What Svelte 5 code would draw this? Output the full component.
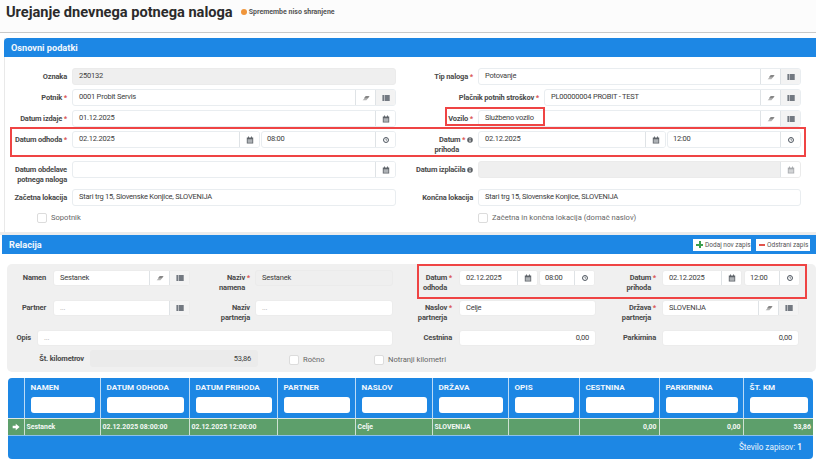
<script>
    const columns = [
        { title: "", width: 16 },
        { title: "NAMEN", width: 76, value: "Sestanek" },
        { title: "DATUM ODHODA", width: 89, value: "02.12.2025 08:00:00" },
        { title: "DATUM PRIHODA", width: 88, value: "02.12.2025 12:00:00" },
        { title: "PARTNER", width: 78, value: "" },
        { title: "NASLOV", width: 77, value: "Celje" },
        { title: "DRŽAVA", width: 76, value: "SLOVENIJA" },
        { title: "OPIS", width: 71, value: "" },
        { title: "CESTNINA", width: 80, value: "0,00", num: true },
        { title: "PARKIRNINA", width: 84, value: "0,00", num: true },
        { title: "ŠT. KM", width: 70, value: "53,86", num: true }
    ];
</script>

{#snippet icon(name)}
    {#if name === "eraser"}
        <svg class="ico" viewBox="0 0 12 12"><path d="M1 9.5 L5.6 4.2 H11 L6.6 9.5 Z" fill="#b4b4b4"/><path d="M5.6 3 H11.4 L8.6 6.4 H2.9 Z" fill="#868686"/></svg>
    {:else if name === "list"}
        <svg class="ico" viewBox="0 0 12 12"><path d="M.6 2h2.6v2.2H.6zM4 2h7.6v2.2H4zM.6 4.9h2.6v2.2H.6zM4 4.9h7.6v2.2H4zM.6 7.8h2.6V10H.6zM4 7.8h7.6V10H4z" fill="#4a525c"/></svg>
    {:else if name === "calendar"}
        <svg class="ico" viewBox="0 0 12 12"><path d="M1.2 2.4h9.6v8.8H1.2z" fill="#5f646a"/><path d="M3 .8h1.4v2.4H3zM7.6 .8h1.4v2.4H7.6z" fill="#5f646a"/><path d="M2.4 5h7.2v5H2.4z" fill="#aeb2b6"/></svg>
    {:else if name === "clock"}
        <svg class="ico" viewBox="0 0 12 12"><circle cx="6" cy="6" r="3.7" fill="none" stroke="#4a525c" stroke-width="1.5"/><path d="M6 3.8V6.2H7.6" fill="none" stroke="#4a525c" stroke-width="1"/></svg>
    {:else if name === "info"}
        <svg class="info" viewBox="0 0 12 12"><circle cx="6" cy="6" r="5.6" fill="#5d6166"/><path d="M5 2.4h2v1.7H5zM5 5h2v4.6H5z" fill="#fff"/></svg>
    {/if}
{/snippet}

{#snippet group(value, width, btns = [], kind = "", mute = "")}
    <div class="group {kind}" style="width: {width}px">
        <span class="val">{value}</span>
        {#each btns as b}
            <span class="btn {b === 'list' ? 'gray' : ''} {mute}">{@render icon(b)}</span>
        {/each}
    </div>
{/snippet}

<div class="page">
    <header class="top">
        <h1>Urejanje dnevnega potnega naloga</h1>
        <span class="dot"></span>
        <span class="unsaved">Spremembe niso shranjene</span>
    </header>

    <section class="panel first">
        <div class="bar rounded">Osnovni podatki</div>
        <div class="form">
            <div class="field">
                <span class="lab l58">Oznaka</span>
                {@render group("250132", 324, [], "off")}
            </div>
            <div class="field">
                <span class="lab l58">Tip naloga <i>*</i></span>
                {@render group("Potovanje", 323, ["eraser", "list"])}
            </div>

            <div class="field">
                <span class="lab l58">Potnik <i>*</i></span>
                {@render group("0001 Probit Servis", 324, ["eraser", "list"])}
            </div>
            <div class="field">
                <span class="lab l124">Plačnik potnih stroškov <i>*</i></span>
                {@render group("PL00000004 PROBIT - TEST", 257, ["eraser", "list"])}
            </div>

            <div class="field">
                <span class="lab l58">Datum izdaje <i>*</i></span>
                {@render group("01.12.2025", 324, ["calendar"])}
            </div>
            <div class="field">
                <span class="lab l58">Vozilo <i>*</i></span>
                {@render group("Službeno vozilo", 323, ["eraser", "list"])}
            </div>

            <div class="field">
                <span class="lab l58">Datum odhoda <i>*</i></span>
                {@render group("02.12.2025", 188, ["calendar"])}
                {@render group("08:00", 135, ["clock"], "short")}
            </div>
            <div class="field">
                <span class="lab l58 two">Datum <i>*</i> {@render icon("info")}<b class="second wide">prihoda</b></span>
                {@render group("02.12.2025", 188, ["calendar"])}
                {@render group("12:00", 134, ["clock"], "short")}
            </div>

            <div class="field">
                <span class="lab l58 two">Datum obdelave<b>potnega naloga</b></span>
                {@render group("", 324, ["calendar"])}
            </div>
            <div class="field">
                <span class="lab l58">Datum izplačila {@render icon("info")}</span>
                {@render group("", 323, ["calendar"], "off", "mute")}
            </div>

            <div class="field">
                <span class="lab l58">Začetna lokacija</span>
                {@render group("Stari trg 15, Slovenske Konjice, SLOVENIJA", 324)}
            </div>
            <div class="field">
                <span class="lab l58">Končna lokacija</span>
                {@render group("Stari trg 15, Slovenske Konjice, SLOVENIJA", 323)}
            </div>

            <label class="check sopotnik"><span class="box"></span>Sopotnik</label>
            <label class="check domov"><span class="box"></span>Začetna in končna lokacija (domač naslov)</label>
        </div>
    </section>

    <section class="panel second-panel">
        <div class="bar">
            Relacija
            <div class="actions">
                <span class="action add"><em class="plus"></em>Dodaj nov zapis</span>
                <span class="action del"><em class="minus"></em>Odstrani zapis</span>
            </div>
        </div>

        <div class="gray-box">
            <div class="rel">
                <div class="field">
                    <span class="lab w39">Namen</span>
                    {@render group("Sestanek", 137, ["eraser", "list"], "plain")}
                </div>
                <div class="field">
                    <span class="lab w60 two">Naziv <i>*</i><b class="second">namena</b></span>
                    {@render group("Sestanek", 138, [], "off")}
                </div>
                <div class="field">
                    <span class="lab w59 two">Datum <i>*</i><b class="second">odhoda</b></span>
                    {@render group("02.12.2025", 79, ["calendar"], "plain")}
                    {@render group("08:00", 56, ["clock"], "plain short")}
                </div>
                <div class="field g6">
                    <span class="lab w60 two">Datum <i>*</i><b class="second">prihoda</b></span>
                    {@render group("02.12.2025", 80, ["calendar"], "plain")}
                    {@render group("12:00", 56, ["clock"], "plain short")}
                </div>

                <div class="field">
                    <span class="lab w39">Partner</span>
                    {@render group("...", 137, ["list"], "plain hint")}
                </div>
                <div class="field">
                    <span class="lab w60 two">Naziv<b>partnerja</b></span>
                    {@render group("...", 138, [], "plain hint")}
                </div>
                <div class="field">
                    <span class="lab w59 two">Naslov <i>*</i><b class="second">partnerja</b></span>
                    {@render group("Celje", 137, [], "plain")}
                </div>
                <div class="field g6">
                    <span class="lab w60 two">Država <i>*</i><b class="second">partnerja</b></span>
                    {@render group("SLOVENIJA", 137, ["eraser", "list"], "plain")}
                </div>

                <div class="field g6 span2">
                    <span class="lab w24">Opis</span>
                    {@render group("...", 356, [], "plain hint")}
                </div>
                <div class="field">
                    <span class="lab w59">Cestnina</span>
                    {@render group("0,00", 137, [], "plain right")}
                </div>
                <div class="field g6">
                    <span class="lab w60">Parkirnina</span>
                    {@render group("0,00", 137, [], "plain right")}
                </div>

                <div class="km">
                    <span class="lab w77">Št. kilometrov</span>
                    {@render group("53,86", 168, [], "off right")}
                    <label class="check roc"><span class="box"></span>Ročno</label>
                    <label class="check"><span class="box"></span>Notranji kilometri</label>
                </div>
            </div>
        </div>

        <div class="grid-wrap">
            <table>
                <colgroup>
                    {#each columns as c}
                        <col style="width: {c.width}px" />
                    {/each}
                </colgroup>
                <thead>
                    <tr>
                        {#each columns as c}
                            <th>
                                {#if c.title}
                                    <span>{c.title}</span>
                                    <div class="filter"></div>
                                {/if}
                            </th>
                        {/each}
                    </tr>
                </thead>
                <tbody>
                    <tr>
                        {#each columns as c, i}
                            <td class:num={c.num}>
                                {#if i === 0}
                                    <svg class="arrow" viewBox="0 0 12 12"><path d="M1 4.2H5.6V1.2L11.4 6L5.6 10.8V7.8H1Z" fill="#fff"/></svg>
                                {:else}
                                    {c.value}
                                {/if}
                            </td>
                        {/each}
                    </tr>
                </tbody>
            </table>
            <div class="foot">Število zapisov: <strong>1</strong></div>
        </div>
    </section>

    <div class="mark m1"></div>
    <div class="mark m2"></div>
    <div class="mark m3"></div>
</div>

<style>
    :global(body) {
        background: #fff;
    }

    .page {
        position: relative;
        width: 816px;
        height: 459px;
        overflow: hidden;
        font-family: Roboto, "Liberation Sans", sans-serif;
        font-size: 7.5px;
        color: #333;
        background: #fff;
    }

    .top {
        display: flex;
        align-items: center;
        height: 33px;
        padding: 0 0 8px 6px;
        box-sizing: border-box;
        background: #fcfcfc;
        border-bottom: 1px solid #c9c9c9;
    }

    h1 {
        margin: 0 8px 0 0;
        font-size: 14.6px;
        font-weight: 700;
        color: #2b2b2b;
    }

    .dot {
        width: 6px;
        height: 6px;
        margin-right: 2px;
        border-radius: 50%;
        background: #f0953a;
    }

    .unsaved {
        font-size: 7px;
        font-weight: 700;
        color: #555;
    }

    .panel.first {
        margin: 5px 0 0 4px;
        height: 194px;
        border-left: 1px solid #e9e9e9;
    }

    .bar {
        display: flex;
        align-items: center;
        justify-content: space-between;
        height: 19px;
        padding: 0 6px 0 7px;
        background: #1d87e4;
        color: #f2f7fc;
        font-size: 9.2px;
        font-weight: 700;
    }

    .rounded {
        margin-left: -1px;
        border-radius: 4px 0 0 0;
    }

    .form {
        display: grid;
        grid-template-columns: 406px 406px;
        grid-template-rows: 17px 17px 17px 26px 24px 17px 11px;
        row-gap: 4px;
        padding: 11px 0 0 4px;
    }

    .field {
        display: flex;
        align-items: flex-start;
        gap: 5px;
    }

    .lab {
        flex: none;
        padding-top: 4px;
        text-align: right;
        font-size: 7.5px;
        letter-spacing: -0.17px;
        font-weight: 700;
        line-height: 10px;
        color: #4a4a4a;
        white-space: nowrap;
    }

    .lab i {
        font-style: normal;
        color: #d9534f;
    }

    .two b {
        display: block;
        font-weight: 700;
    }

    .second {
        padding-right: 5px;
    }

    .second.wide {
        padding-right: 14px;
    }

    .info {
        width: 6px;
        height: 6px;
        vertical-align: -0.5px;
    }

    .l58 { width: 58px; }
    .l124 { width: 124px; }
    .w24 { width: 24px; }
    .w39 { width: 39px; margin-right: 2px; }
    .w59 { width: 59px; margin-right: 2px; }
    .w60 { width: 60px; }
    .w77 { width: 77px; }

    .group {
        flex: none;
        display: flex;
        height: 17px;
        box-sizing: border-box;
        border: 1px solid #e9edf0;
        border-radius: 3px;
        background: #fff;
        overflow: hidden;
        font-size: 7.5px;
        letter-spacing: -0.22px;
        color: #3c3c3c;
    }

    .group + .group {
        margin-left: -4px;
    }

    .val {
        flex: 1;
        min-width: 0;
        padding: 0 6px;
        line-height: 14px;
        white-space: nowrap;
    }

    .short .val {
        padding-left: 5px;
    }

    .btn {
        flex: none;
        display: flex;
        align-items: center;
        justify-content: center;
        width: 19px;
        border-left: 1px solid #dfe3e6;
        background: #fff;
    }

    .btn.gray {
        background: #f3f3f3;
    }

    .btn.mute .ico {
        opacity: 0.55;
    }

    .ico {
        width: 8px;
        height: 8px;
    }

    .off {
        background: #efefef;
        border-color: #ebebeb;
    }

    .right .val {
        text-align: right;
    }

    .hint .val {
        color: #aaa;
    }

    .check {
        display: flex;
        align-items: center;
        gap: 4px;
        font-size: 7.6px;
        color: #666;
    }

    .box {
        flex: none;
        width: 10px;
        height: 10px;
        box-sizing: border-box;
        border: 1px solid #dcdcdc;
        border-radius: 2px;
        background: #fff;
    }

    .sopotnik {
        margin: 4px 0 0 28px;
    }

    .domov {
        margin: 4px 0 0 63px;
    }

    .second-panel {
        padding-left: 2px;
        border-top: 3px solid #ececec;
    }

    .actions {
        display: flex;
        gap: 5px;
    }

    .action {
        display: flex;
        align-items: center;
        gap: 2px;
        height: 12px;
        box-sizing: border-box;
        padding-left: 3px;
        background: #fff;
        font-size: 6.5px;
        font-weight: 400;
        color: #555;
    }

    .add {
        width: 58px;
    }

    .del {
        width: 54px;
    }

    .plus {
        width: 7px;
        height: 7px;
        background:
            linear-gradient(#3c9f4e, #3c9f4e) center / 7px 2px no-repeat,
            linear-gradient(#3c9f4e, #3c9f4e) center / 2px 7px no-repeat;
    }

    .minus {
        width: 6px;
        height: 2px;
        background: #e2534b;
    }

    .gray-box {
        margin: 10px 0 0 5px;
        height: 108px;
        border-radius: 5px;
        background: #f0f0f0;
    }

    .rel {
        display: grid;
        grid-template-columns: 183px 203px 203px 203px;
        grid-template-rows: 26px 26px 16px 17px;
        row-gap: 4px;
        padding-top: 6px;
    }

    .rel .lab {
        padding-top: 3px;
    }

    .rel .group {
        height: 16px;
    }

    .rel .val {
        line-height: 13px;
    }

    .plain {
        border-color: #ececec;
    }

    .span2 {
        grid-column: span 2;
    }

    .km {
        grid-column: 1 / -1;
        display: flex;
        align-items: flex-start;
        gap: 6px;
    }

    .km .lab {
        padding-top: 4px;
    }

    .km .group {
        height: 17px;
        background: #ebebeb;
    }

    .km .val {
        line-height: 15px;
    }

    .km .check {
        height: 17px;
        padding-top: 1px;
    }

    .km .roc {
        width: 79px;
        margin-left: 25px;
    }

    .g6 { gap: 6px; }

    .grid-wrap {
        margin: 6px 0 0 6px;
        width: 805px;
        border-radius: 4px;
        overflow: hidden;
        background: #1d87e4;
    }

    table {
        width: 805px;
        table-layout: fixed;
        border-collapse: collapse;
    }

    th {
        height: 40px;
        padding: 4px 5px 0 6px;
        box-sizing: border-box;
        vertical-align: top;
        text-align: left;
        border-left: 1px solid rgba(255, 255, 255, 0.7);
        font-size: 8.1px;
        font-weight: 700;
        color: #f2f7fc;
    }

    th:first-child, td:first-child {
        border-left: none;
    }

    th span {
        display: block;
        height: 15px;
        line-height: 11px;
        white-space: nowrap;
    }

    .filter {
        height: 16px;
        border-radius: 3px;
        background: #fff;
    }

    td {
        height: 17px;
        padding: 0 2px;
        box-sizing: border-box;
        border-left: 1px solid rgba(255, 255, 255, 0.7);
        border-top: 1px solid #dfe9e2;
        border-bottom: 1px solid #8ec1ea;
        background: #5d9f6b;
        font-size: 6.9px;
        font-weight: 700;
        color: #f4f8f5;
        white-space: nowrap;
    }

    td.num {
        text-align: right;
    }

    .arrow {
        display: block;
        width: 8px;
        height: 8px;
        margin-left: 2px;
    }

    .foot {
        height: 23px;
        padding-right: 11px;
        line-height: 22px;
        text-align: right;
        font-size: 8.2px;
        color: #eaf3fb;
    }

    .mark {
        position: absolute;
        border: 2px solid #ef4444;
        box-sizing: border-box;
    }

    .m1 {
        left: 10px;
        top: 127px;
        width: 796px;
        height: 30px;
    }

    .m2 {
        left: 445px;
        top: 107px;
        width: 100px;
        height: 19px;
    }

    .m3 {
        left: 417px;
        top: 264px;
        width: 390px;
        height: 35px;
    }
</style>
